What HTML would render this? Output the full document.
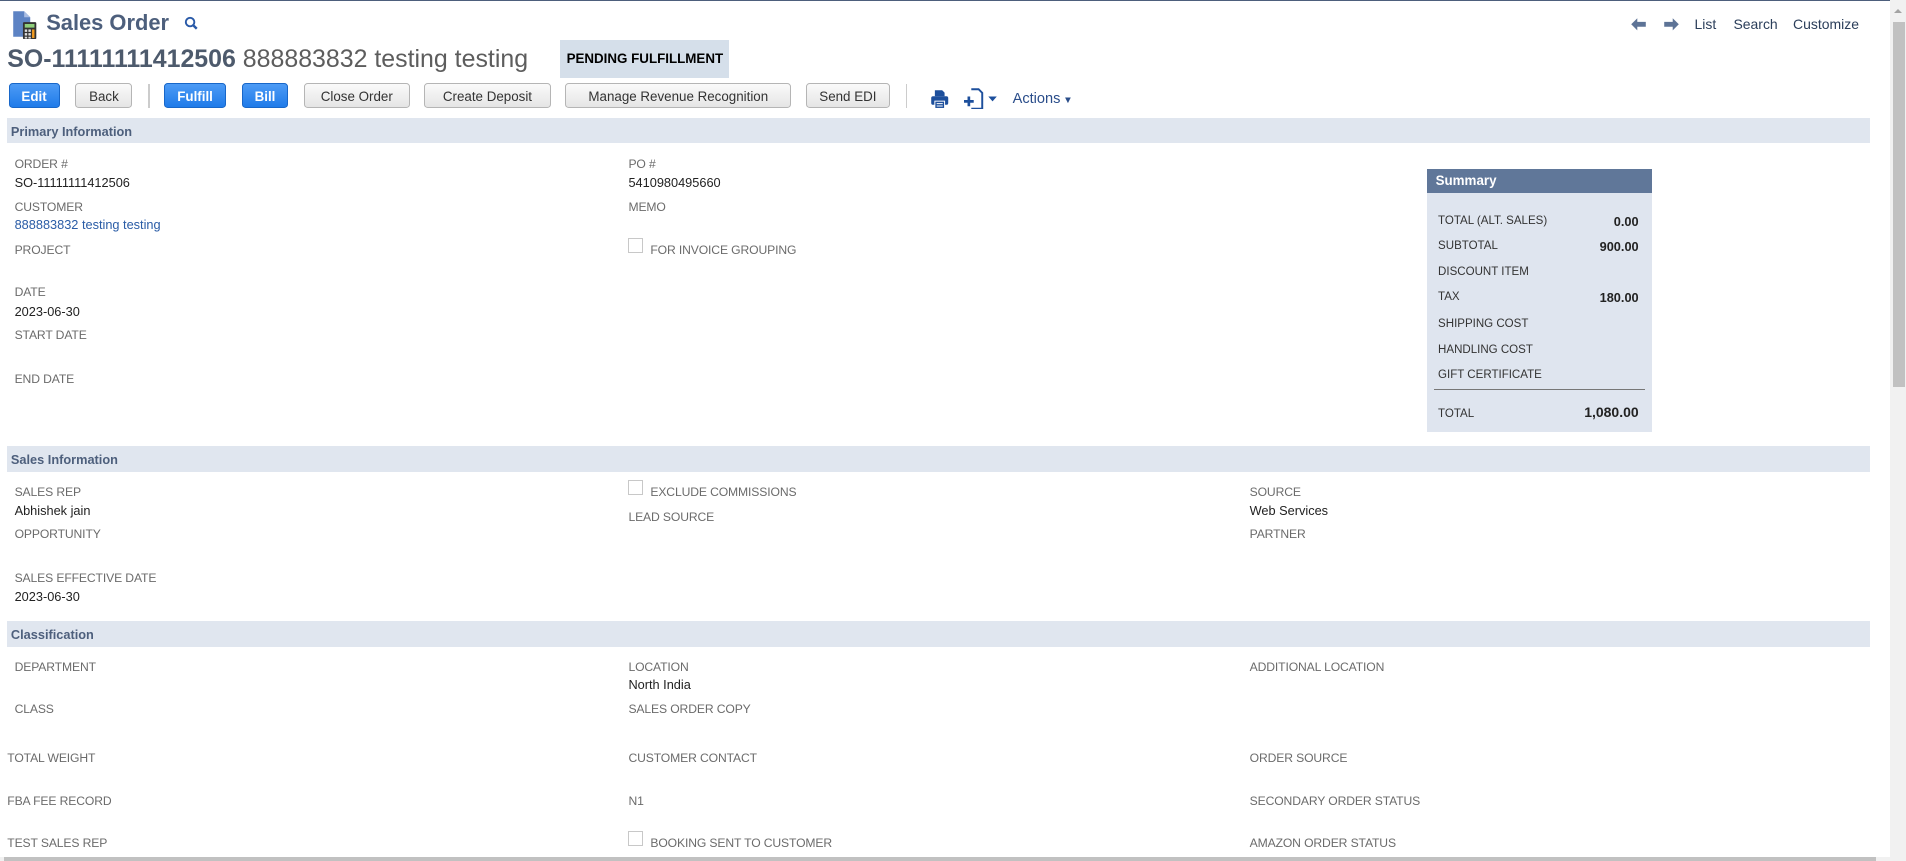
<!DOCTYPE html>
<html><head><meta charset="utf-8"><style>
html,body{margin:0;padding:0;overflow:hidden;background:#fff}
body{width:1906px;height:861px;font-family:"Liberation Sans",Arial,sans-serif}
#w{zoom:1.2156;position:relative;width:1568px;height:708px;overflow:hidden}
.a{position:absolute;white-space:nowrap;line-height:14px}
.l{font-size:10px;color:#6b6b6b;letter-spacing:-0.1px;margin-top:1px}
.v{font-size:10.5px;color:#222;margin-top:1px}
.bar{position:absolute;left:6px;width:1532px;height:21px;background:#e0e6ef}
.bar span{position:absolute;left:3px;top:4px;font-size:10.5px;font-weight:bold;color:#4d5f7c;line-height:14px}
.btn{position:absolute;top:68px;height:21px;border:1px solid #b5b5b5;border-radius:3px;background:linear-gradient(#fafafa,#e5e5e5);font-size:11px;color:#333;text-align:center;line-height:21px;box-sizing:border-box}
.btn.b{background:linear-gradient(#4d9bf5,#1f7be9);border-color:#1867c9;color:#fff;font-weight:bold}
.cb{position:absolute;width:12px;height:12px;border:1px solid #c8c8c8;background:#fff;box-sizing:border-box}
.sr{position:absolute;left:9px;font-size:9.5px;color:#333;line-height:14px;margin-top:1px}
.sv{position:absolute;right:11px;font-size:10.5px;font-weight:bold;color:#222;line-height:14px;margin-top:1px}
</style></head><body><div id="w">
<div class="a" style="left:0;top:0;width:1568px;height:1px;background:#4d5f7c"></div>

<svg class="a" style="left:10px;top:8px" width="22" height="24" viewBox="0 0 22 24">
<path d="M1 1h9l5 5v16H1z" fill="#5d83c4"/><path d="M10 1l5 5h-5z" fill="#a9bde3"/>
<rect x="9" y="10" width="11" height="14" rx="1" fill="#333"/>
<rect x="10.5" y="11.5" width="8" height="3" fill="#8fcf7a"/>
<g fill="#ddd"><rect x="10.5" y="16" width="2" height="2"/><rect x="13.5" y="16" width="2" height="2"/><rect x="10.5" y="19" width="2" height="2"/><rect x="13.5" y="19" width="2" height="2"/><rect x="10.5" y="22" width="2" height="1.5"/><rect x="13.5" y="22" width="2" height="1.5"/></g>
<rect x="16.5" y="16" width="2" height="7" fill="#f29a1f"/>
</svg>
<div class="a" style="left:38px;top:8px;font-size:18px;line-height:22px;font-weight:bold;color:#4d5f7c">Sales Order</div>
<svg class="a" style="left:151px;top:13px" width="12" height="12" viewBox="0 0 12 12"><circle cx="5" cy="5" r="3.5" fill="none" stroke="#2a5aa8" stroke-width="1.6"/><path d="M7.5 7.5l3 3" stroke="#2a5aa8" stroke-width="2"/></svg>

<svg class="a" style="left:1341px;top:14px" width="14" height="12" viewBox="0 0 14 12"><path d="M1 6l5-5v3h7v4H6v3z" fill="#5d7396"/></svg>
<svg class="a" style="left:1368px;top:14px" width="14" height="12" viewBox="0 0 14 12"><path d="M13 6L8 1v3H1v4h7v3z" fill="#5d7396"/></svg>
<div class="a" style="left:1394px;top:13px;font-size:11.5px;color:#2b3e5a">List</div>
<div class="a" style="left:1426px;top:13px;font-size:11.5px;color:#2b3e5a">Search</div>
<div class="a" style="left:1475px;top:13px;font-size:11.5px;color:#2b3e5a">Customize</div>

<div class="a" style="left:6px;top:36px;font-size:20.5px;line-height:26px;font-weight:bold;color:#4d5a6c">SO-11111111412506 <span style="font-weight:normal;color:#5d5d5d">888883832 testing testing</span></div>
<div class="a" style="left:461px;top:33px;width:139px;height:31px;background:#d5dfea;font-size:11px;font-weight:bold;color:#000;line-height:31px;text-align:center">PENDING FULFILLMENT</div>

<div class="btn b" style="left:7px;width:42px">Edit</div>
<div class="btn" style="left:62px;width:47px">Back</div>
<div class="a" style="left:122px;top:69px;width:1px;height:20px;background:#ccc"></div>
<div class="btn b" style="left:135px;width:51px">Fulfill</div>
<div class="btn b" style="left:199px;width:38px">Bill</div>
<div class="btn" style="left:250px;width:87px">Close Order</div>
<div class="btn" style="left:349px;width:104px">Create Deposit</div>
<div class="btn" style="left:465px;width:186px">Manage Revenue Recognition</div>
<div class="btn" style="left:663px;width:69px">Send EDI</div>
<div class="a" style="left:745px;top:69px;width:1px;height:20px;background:#ccc"></div>
<svg class="a" style="left:765px;top:73px" width="16" height="16" viewBox="0 0 16 16"><path d="M4 1h6l2 2v3H4z" fill="#1d4f9c"/><rect x="1" y="6" width="14" height="7" rx="1.5" fill="#1d4f9c"/><rect x="4" y="10" width="8" height="6" fill="#1d4f9c" stroke="#fff" stroke-width="0.8"/><path d="M5.5 12h5M5.5 14h5" stroke="#fff" stroke-width="0.8"/></svg>
<svg class="a" style="left:793px;top:72px" width="28" height="18" viewBox="0 0 28 18"><path d="M6 1h6l3 3v13H6" fill="none" stroke="#1d4f9c" stroke-width="1.6"/><path d="M4 7v8M0 11h8" stroke="#1d4f9c" stroke-width="2.2"/><path d="M20 7h7l-3.5 4z" fill="#1d4f9c"/></svg>
<div class="a" style="left:833px;top:75px;font-size:12px;color:#2a4d8a">Actions<span style="font-size:8px"> ▼</span></div>

<div class="bar" style="top:97px"><span>Primary Information</span></div>
<div class="a l" style="left:12px;top:127px">ORDER #</div>
<div class="a v" style="left:12px;top:142px">SO-11111111412506</div>
<div class="a l" style="left:12px;top:163px">CUSTOMER</div>
<div class="a v" style="left:12px;top:177px;color:#2a5ca6">888883832 testing testing</div>
<div class="a l" style="left:12px;top:198px">PROJECT</div>
<div class="a l" style="left:12px;top:233px">DATE</div>
<div class="a v" style="left:12px;top:248px">2023-06-30</div>
<div class="a l" style="left:12px;top:268px">START DATE</div>
<div class="a l" style="left:12px;top:304px">END DATE</div>
<div class="a l" style="left:517px;top:127px">PO #</div>
<div class="a v" style="left:517px;top:142px">5410980495660</div>
<div class="a l" style="left:517px;top:163px">MEMO</div>
<div class="cb" style="left:517px;top:196px"></div>
<div class="a l" style="left:535px;top:198px">FOR INVOICE GROUPING</div>

<div class="a" style="left:1174px;top:139px;width:185px;height:216px;background:#dfe5ef">
<div style="height:20px;background:#607799;color:#fff;font-size:11px;font-weight:bold;line-height:20px;padding-left:7px">Summary</div>
<div class="sr" style="top:35px">TOTAL (ALT. SALES)</div><div class="sv" style="top:35px">0.00</div>
<div class="sr" style="top:56px">SUBTOTAL</div><div class="sv" style="top:56px">900.00</div>
<div class="sr" style="top:77px">DISCOUNT ITEM</div>
<div class="sr" style="top:98px">TAX</div><div class="sv" style="top:98px">180.00</div>
<div class="sr" style="top:120px">SHIPPING COST</div>
<div class="sr" style="top:141px">HANDLING COST</div>
<div class="sr" style="top:162px">GIFT CERTIFICATE</div>
<div style="position:absolute;left:6px;top:181px;width:173px;height:1px;background:#777"></div>
<div class="sr" style="top:194px">TOTAL</div><div class="sv" style="top:192px;font-size:11.5px">1,080.00</div>
</div>

<div class="bar" style="top:367px"><span>Sales Information</span></div>
<div class="a l" style="left:12px;top:397px">SALES REP</div>
<div class="a v" style="left:12px;top:412px">Abhishek jain</div>
<div class="a l" style="left:12px;top:432px">OPPORTUNITY</div>
<div class="a l" style="left:12px;top:468px">SALES EFFECTIVE DATE</div>
<div class="a v" style="left:12px;top:483px">2023-06-30</div>
<div class="cb" style="left:517px;top:395px"></div>
<div class="a l" style="left:535px;top:397px">EXCLUDE COMMISSIONS</div>
<div class="a l" style="left:517px;top:418px">LEAD SOURCE</div>
<div class="a l" style="left:1028px;top:397px">SOURCE</div>
<div class="a v" style="left:1028px;top:412px">Web Services</div>
<div class="a l" style="left:1028px;top:432px">PARTNER</div>

<div class="bar" style="top:511px"><span>Classification</span></div>
<div class="a l" style="left:12px;top:541px">DEPARTMENT</div>
<div class="a l" style="left:12px;top:576px">CLASS</div>
<div class="a l" style="left:517px;top:541px">LOCATION</div>
<div class="a v" style="left:517px;top:555px">North India</div>
<div class="a l" style="left:517px;top:576px">SALES ORDER COPY</div>
<div class="a l" style="left:1028px;top:541px">ADDITIONAL LOCATION</div>
<div class="a l" style="left:6px;top:616px">TOTAL WEIGHT</div>
<div class="a l" style="left:517px;top:616px">CUSTOMER CONTACT</div>
<div class="a l" style="left:1028px;top:616px">ORDER SOURCE</div>
<div class="a l" style="left:6px;top:651px">FBA FEE RECORD</div>
<div class="a l" style="left:517px;top:651px">N1</div>
<div class="a l" style="left:1028px;top:651px">SECONDARY ORDER STATUS</div>
<div class="a l" style="left:6px;top:686px">TEST SALES REP</div>
<div class="cb" style="left:517px;top:684px"></div>
<div class="a l" style="left:535px;top:686px">BOOKING SENT TO CUSTOMER</div>
<div class="a l" style="left:1028px;top:686px">AMAZON ORDER STATUS</div>

<div class="a" style="left:0;top:705px;width:1555px;height:3px;background:#f1f1f1"><div style="margin-left:3px;width:1540px;height:3px;background:#c1c1c1"></div></div>
<div class="a" style="left:1555px;top:0;width:13px;height:708px;background:#f1f1f1"></div>
<div class="a" style="left:1557px;top:18px;width:10px;height:300px;background:#c1c1c1"></div>
<div class="a" style="left:1558px;top:7px;width:0;height:0;border:4px solid transparent;border-bottom-color:#a3a3a3;border-top:0"></div>
</div></body></html>
